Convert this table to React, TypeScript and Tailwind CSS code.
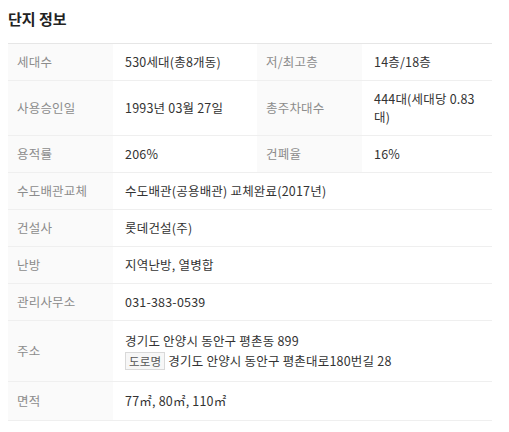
const font = { fontFamily: '"Noto Sans CJK KR", "Noto Sans", sans-serif' };

const th = "bg-[#fafafa] text-[#8c8c8c] font-normal text-left align-middle pl-[9px] pr-2 py-[9px] border-b border-[#efefef]";
const td = "text-[#333] align-middle pl-3 pr-2 py-[9px] border-b border-[#efefef]";

const App = () => {
    return (
        <div className="w-[509px] h-[432px] bg-white px-2" style={font}>
            <h2 className="text-[15px] font-bold text-[#222] pt-[8px] pb-[13px] leading-[22px]">단지 정보</h2>
            <table className="w-[484px] table-fixed border-t border-[#e6e6e6] text-[12.5px] leading-[18px] tracking-[0.2px]">
                <colgroup>
                    <col className="w-[105px]" />
                    <col className="w-[144px]" />
                    <col className="w-[105px]" />
                    <col className="w-[130px]" />
                </colgroup>
                <tbody>
                <tr>
                    <th className={th}>세대수</th>
                    <td className={td}>530세대(총8개동)</td>
                    <th className={th}>저/최고층</th>
                    <td className={td}>14층/18층</td>
                </tr>
                <tr>
                    <th className={th}>사용승인일</th>
                    <td className={td}>1993년 03월 27일</td>
                    <th className={th}>총주차대수</th>
                    <td className={td}>444대(세대당 0.83대)</td>
                </tr>
                <tr>
                    <th className={th}>용적률</th>
                    <td className={td}>206%</td>
                    <th className={th}>건폐율</th>
                    <td className={td}>16%</td>
                </tr>
                <tr>
                    <th className={th}>수도배관교체</th>
                    <td className={td} colSpan={3}>수도배관(공용배관) 교체완료(2017년)</td>
                </tr>
                <tr>
                    <th className={th}>건설사</th>
                    <td className={td} colSpan={3}>롯데건설(주)</td>
                </tr>
                <tr>
                    <th className={th}>난방</th>
                    <td className={td} colSpan={3}>지역난방, 열병합</td>
                </tr>
                <tr>
                    <th className={th}>관리사무소</th>
                    <td className={td} colSpan={3}>031-383-0539</td>
                </tr>
                <tr>
                    <th className={th}>주소</th>
                    <td className="text-[#333] align-middle pl-3 pr-2 py-[10px] border-b border-[#efefef] leading-[20px]" colSpan={3}>
                        <p>경기도 안양시 동안구 평촌동 899</p>
                        <p className="flex items-center">
                            <span className="inline-block border border-[#d9d9d9] bg-[#f7f7f7] text-[#555] text-[11.5px] leading-[16px] px-[3px] mr-[3px]">도로명</span>
                            경기도 안양시 동안구 평촌대로180번길 28
                        </p>
                    </td>
                </tr>
                <tr>
                    <th className={th + " py-[10px]"}>면적</th>
                    <td className={td + " py-[10px]"} colSpan={3}>77㎡, 80㎡, 110㎡</td>
                </tr>
                </tbody>
            </table>
        </div>
    );
};
export default App;
